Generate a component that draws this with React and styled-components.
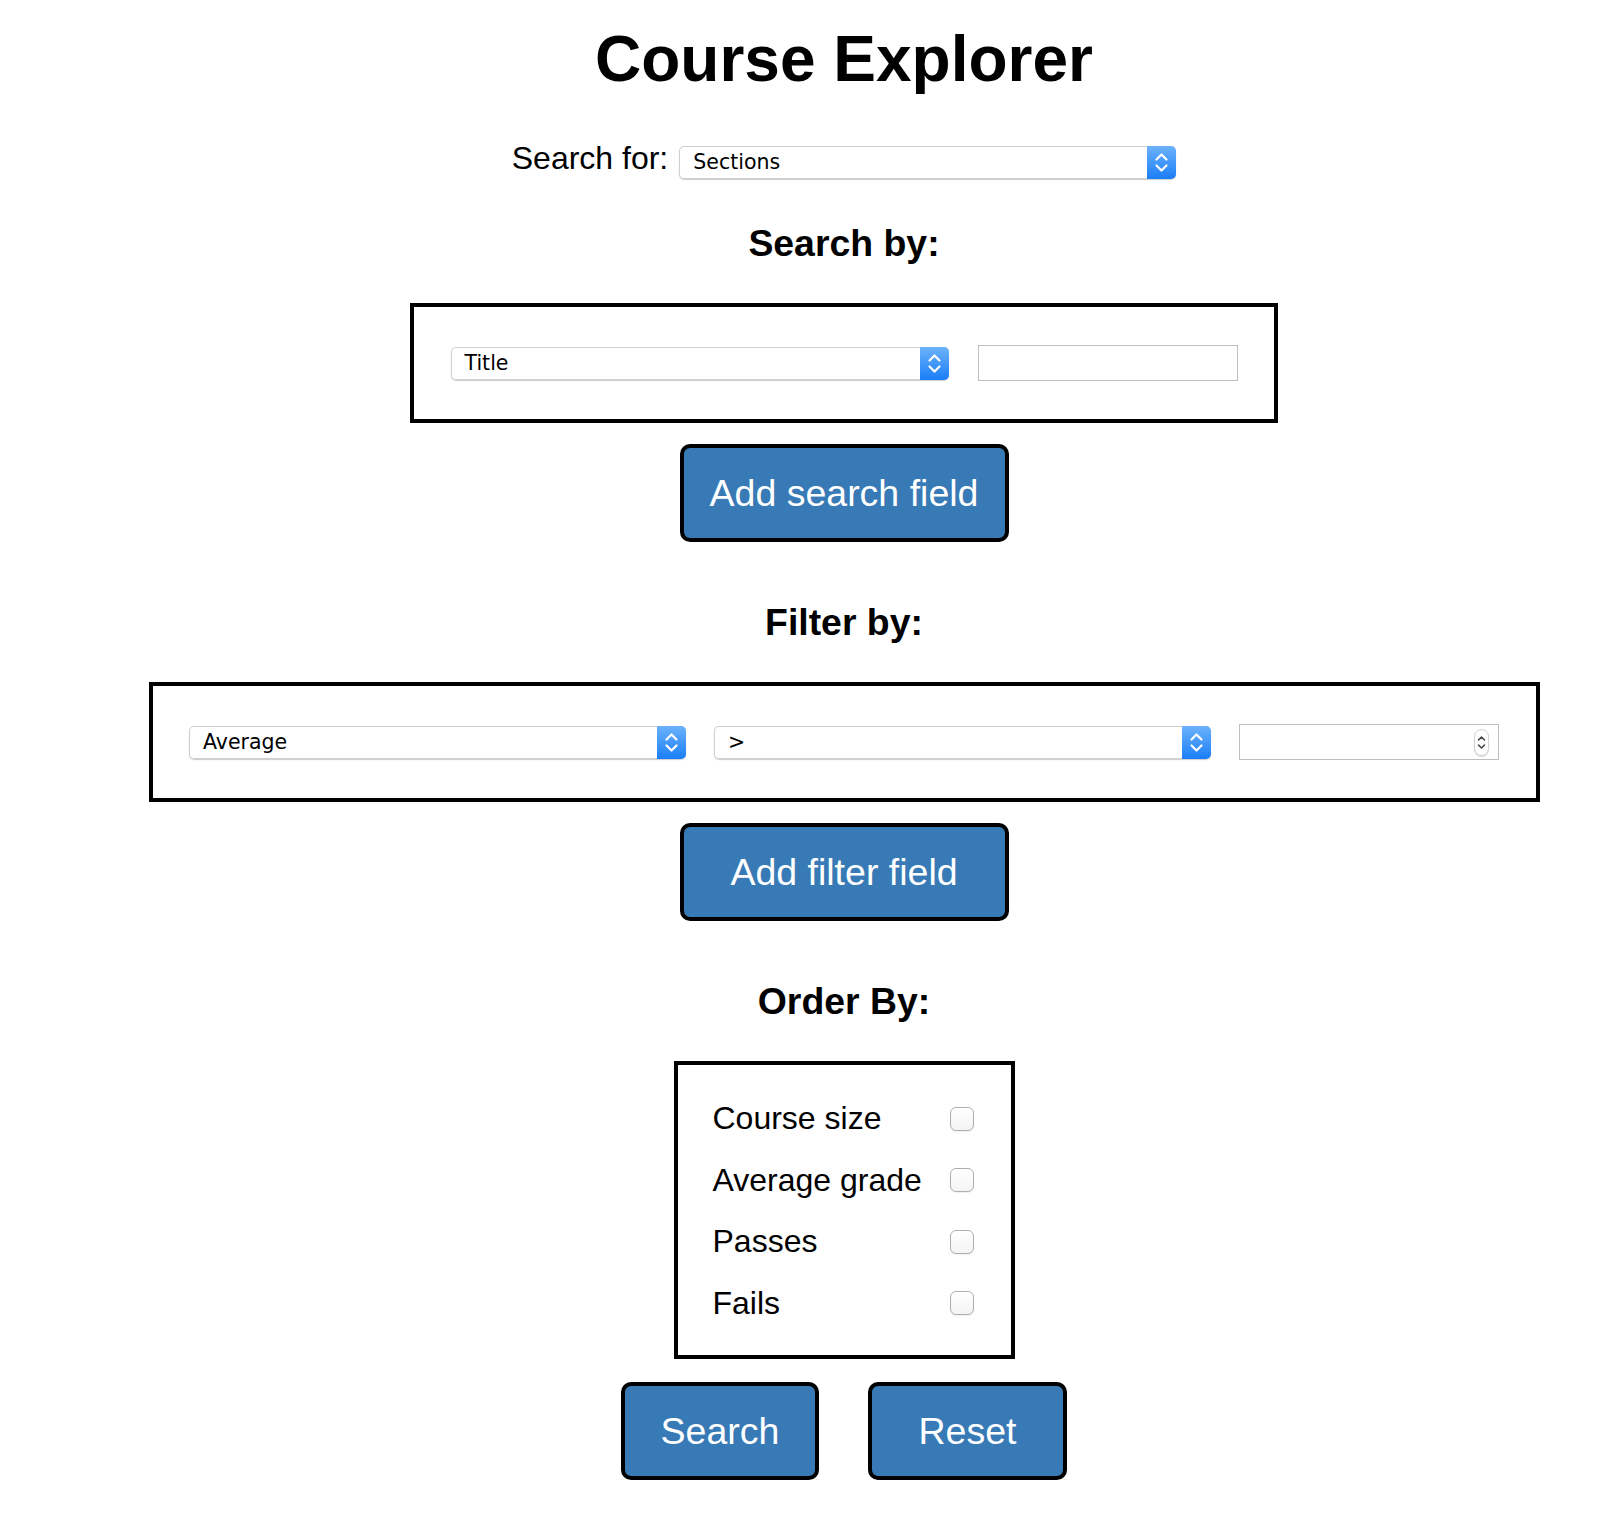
import React from "react";
import styled, { createGlobalStyle } from "styled-components";

const GlobalStyle = createGlobalStyle`
  body {
    margin: 0;
    background: #fff;
    color: #000;
    font-family: "Liberation Sans", Arial, Helvetica, sans-serif;
  }
`;

const Page = styled.main`
  display: flex;
  flex-direction: column;
  align-items: center;
  padding: 22px 0 58px 68px;
`;

const Title = styled.h1`
  margin: 0;
  font-size: 64px;
  line-height: 74px;
  font-weight: 700;
`;

const SearchForRow = styled.div`
  display: flex;
  align-items: baseline;
  gap: 11px;
  margin-top: 44px;
`;

const RowLabel = styled.label`
  font-size: 32px;
  line-height: 37px;
`;

const SectionHeading = styled.h3`
  margin: ${(p) => p.$top}px 0 0;
  font-size: 37.4px;
  line-height: 43px;
  font-weight: 700;
`;

const FieldBox = styled.div`
  margin-top: 38.5px;
  width: ${(p) => p.$width}px;
  box-sizing: border-box;
  border: 4px solid #000;
  padding: 38px 36px;
  display: flex;
  align-items: center;
  justify-content: center;
  gap: ${(p) => p.$gap}px;
`;

const SelectBox = styled.div`
  display: flex;
  width: ${(p) => p.$width}px;
  height: 33px;
  border-radius: 5px;
  overflow: hidden;
  background: #fff;
  box-shadow: inset 0 0 0 1px #d0d0d0, 0 1px 1px rgba(0, 0, 0, 0.2);
  font-family: "DejaVu Sans", "Liberation Sans", sans-serif;
  font-size: 20.5px;
  cursor: default;
`;

const SelectText = styled.span`
  flex: 1;
  padding-left: 14px;
  line-height: 33px;
  white-space: nowrap;
`;

const ArrowTab = styled.span`
  width: 29px;
  display: flex;
  background: linear-gradient(#6cb2fb, #1a7ef6);
`;

const TextInput = styled.input`
  width: 260px;
  height: 36px;
  box-sizing: border-box;
  margin: 0;
  padding: 0 8px;
  border: 1px solid #bfbfbf;
  border-radius: 0;
  font-size: 20px;
  outline: none;
`;

const NumberField = styled.div`
  display: flex;
  align-items: center;
  width: 260px;
  height: 36px;
  box-sizing: border-box;
  border: 1px solid #bfbfbf;
  padding-right: 9px;
  background: #fff;
`;

const NumberInput = styled.input`
  flex: 1;
  min-width: 0;
  height: 100%;
  margin: 0;
  padding: 0 8px;
  border: none;
  outline: none;
  background: transparent;
  font-size: 20px;
`;

const Spinner = styled.span`
  display: flex;
  width: 15px;
  height: 27px;
  box-sizing: border-box;
  border: 1px solid #d2d2d2;
  border-radius: 8px;
  background: #fff;
  box-shadow: 0 1px 1px rgba(0, 0, 0, 0.15);
`;

const ActionButton = styled.button`
  margin-top: ${(p) => p.$top || 0}px;
  width: ${(p) => p.$width}px;
  height: 98px;
  box-sizing: border-box;
  padding: 0;
  border: 4px solid #000;
  border-radius: 10px;
  background: #377ab6;
  color: #fff;
  font-family: "Liberation Sans", Arial, sans-serif;
  font-size: 37.5px;
  cursor: pointer;
`;

const OrderBox = styled.div`
  margin-top: 38.5px;
  width: 341px;
  box-sizing: border-box;
  border: 4px solid #000;
  padding: 23px 37px 21px 35px;
  display: flex;
  flex-direction: column;
`;

const OrderRow = styled.label`
  display: flex;
  align-items: center;
  justify-content: space-between;
  height: 61.5px;
  font-size: 32px;
  line-height: 37px;
`;

const Checkbox = styled.input`
  appearance: none;
  margin: 0;
  width: 24px;
  height: 24px;
  box-sizing: border-box;
  border: 1px solid #aeaeae;
  border-radius: 6px;
  background: linear-gradient(#fff, #f4f4f4);
  box-shadow: 0 1px 1px rgba(0, 0, 0, 0.06);
`;

const ButtonRow = styled.div`
  display: flex;
  gap: 49px;
  margin-top: 23px;
`;

function Select({ value, width = 497 }) {
  return (
    <SelectBox $width={width}>
      <SelectText>{value}</SelectText>
      <ArrowTab>
        <svg width="29" height="33" viewBox="0 0 29 33" fill="none">
          <path d="M9.5 13.5 L14.5 8.5 L19.5 13.5" stroke="#fff" strokeWidth="2.2" strokeLinecap="round" strokeLinejoin="round" />
          <path d="M9.5 19.5 L14.5 24.5 L19.5 19.5" stroke="#fff" strokeWidth="2.2" strokeLinecap="round" strokeLinejoin="round" />
        </svg>
      </ArrowTab>
    </SelectBox>
  );
}

function NumberBox() {
  return (
    <NumberField>
      <NumberInput type="text" />
      <Spinner>
        <svg width="13" height="25" viewBox="0 0 13 25" fill="none">
          <path d="M3.5 10 L6.5 7 L9.5 10" stroke="#444" strokeWidth="1.6" strokeLinecap="round" strokeLinejoin="round" />
          <path d="M3.5 15 L6.5 18 L9.5 15" stroke="#444" strokeWidth="1.6" strokeLinecap="round" strokeLinejoin="round" />
        </svg>
      </Spinner>
    </NumberField>
  );
}

const orderFields = ["Course size", "Average grade", "Passes", "Fails"];

export default function App() {
  return (
    <>
      <GlobalStyle />
      <Page>
        <Title>Course Explorer</Title>

        <SearchForRow>
          <RowLabel>Search for:</RowLabel>
          <Select value="Sections" />
        </SearchForRow>

        <SectionHeading $top={42.5}>Search by:</SectionHeading>
        <FieldBox $width={868} $gap={29}>
          <Select value="Title" width={498} />
          <TextInput type="text" />
        </FieldBox>
        <ActionButton $top={21} $width={329}>Add search field</ActionButton>

        <SectionHeading $top={58.5}>Filter by:</SectionHeading>
        <FieldBox $width={1391} $gap={28}>
          <Select value="Average" />
          <Select value=">" />
          <NumberBox />
        </FieldBox>
        <ActionButton $top={21} $width={329}>Add filter field</ActionButton>

        <SectionHeading $top={58.5}>Order By:</SectionHeading>
        <OrderBox>
          {orderFields.map((field) => (
            <OrderRow key={field}>
              {field}
              <Checkbox type="checkbox" />
            </OrderRow>
          ))}
        </OrderBox>

        <ButtonRow>
          <ActionButton $width={198}>Search</ActionButton>
          <ActionButton $width={199}>Reset</ActionButton>
        </ButtonRow>
      </Page>
    </>
  );
}
